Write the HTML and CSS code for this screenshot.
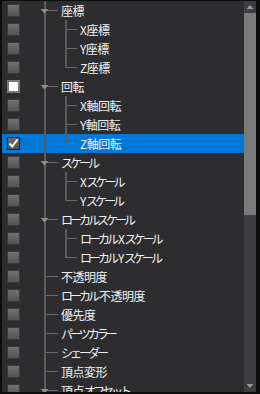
FILE: index.html
```html
<!DOCTYPE html>
<html lang="ja">
<head>
    <meta charset="UTF-8">
    <title>Track List</title>
    <link rel="stylesheet" href="styles.css">
</head>
<body>
    <div class="panel">
        <div class="tree">
            <div class="row"><span class="cell"><span class="cb"></span></span><span class="g1 tee"><span class="tri"></span></span><span class="label">座標</span></div>
            <div class="row"><span class="cell"><span class="cb"></span></span><span class="g1"></span><span class="g2 tee"></span><span class="label">X座標</span></div>
            <div class="row"><span class="cell"><span class="cb"></span></span><span class="g1"></span><span class="g2 tee"></span><span class="label">Y座標</span></div>
            <div class="row"><span class="cell"><span class="cb"></span></span><span class="g1"></span><span class="g2 last"></span><span class="label">Z座標</span></div>
            <div class="row"><span class="cell"><span class="cb on"></span></span><span class="g1 tee"><span class="tri"></span></span><span class="label">回転</span></div>
            <div class="row"><span class="cell"><span class="cb"></span></span><span class="g1"></span><span class="g2 tee"></span><span class="label">X軸回転</span></div>
            <div class="row"><span class="cell"><span class="cb"></span></span><span class="g1"></span><span class="g2 tee"></span><span class="label">Y軸回転</span></div>
            <div class="row selected"><span class="cell"><span class="cb checked"><svg width="11" height="11" viewBox="0 0 11 11"><path d="M1.5 5.5 L4.2 8.5 L9.5 1.5" fill="none" stroke="#fff" stroke-width="2"/></svg></span></span><span class="g1"></span><span class="g2 last"></span><span class="label">Z軸回転</span></div>
            <div class="row"><span class="cell"><span class="cb"></span></span><span class="g1 tee"><span class="tri"></span></span><span class="label"><span class="k">スケール</span></span></div>
            <div class="row"><span class="cell"><span class="cb"></span></span><span class="g1"></span><span class="g2 tee"></span><span class="label">X<span class="k">スケール</span></span></div>
            <div class="row"><span class="cell"><span class="cb"></span></span><span class="g1"></span><span class="g2 last"></span><span class="label">Y<span class="k">スケール</span></span></div>
            <div class="row"><span class="cell"><span class="cb"></span></span><span class="g1 tee"><span class="tri"></span></span><span class="label"><span class="k">ローカルスケール</span></span></div>
            <div class="row"><span class="cell"><span class="cb"></span></span><span class="g1"></span><span class="g2 tee"></span><span class="label"><span class="k mid">ローカル</span>X<span class="k">スケール</span></span></div>
            <div class="row"><span class="cell"><span class="cb"></span></span><span class="g1"></span><span class="g2 last"></span><span class="label"><span class="k mid">ローカル</span>Y<span class="k">スケール</span></span></div>
            <div class="row"><span class="cell"><span class="cb"></span></span><span class="g1 tee"></span><span class="label">不透明度</span></div>
            <div class="row"><span class="cell"><span class="cb"></span></span><span class="g1 tee"></span><span class="label"><span class="k mid">ローカル</span>不透明度</span></div>
            <div class="row"><span class="cell"><span class="cb"></span></span><span class="g1 tee"></span><span class="label">優先度</span></div>
            <div class="row"><span class="cell"><span class="cb"></span></span><span class="g1 tee"></span><span class="label"><span class="k">パーツカラー</span></span></div>
            <div class="row"><span class="cell"><span class="cb"></span></span><span class="g1 tee"></span><span class="label"><span class="k">シェーダー</span></span></div>
            <div class="row"><span class="cell"><span class="cb"></span></span><span class="g1 tee"></span><span class="label">頂点変形</span></div>
            <div class="row"><span class="cell"><span class="cb"></span></span><span class="g1 tee"><span class="tri"></span></span><span class="label">頂点<span class="k">オフセット</span></span></div>
        </div>
        <div class="scrollbar">
            <div class="arrow up"><span></span></div>
            <div class="track"><div class="thumb"></div></div>
            <div class="arrow down"><span></span></div>
        </div>
    </div>
</body>
</html>
```

FILE: styles.css
```css
body {
    margin: 0;
    background: #0c0c0c;
}

.panel {
    display: flex;
    width: 260px;
    height: 394px;
    box-sizing: border-box;
    background: #2d2d30;
    border-top: 1px solid #0c0c0c;
    border-left: 2px solid #0c0c0c;
    border-bottom: 2px solid #0c0c0c;
    border-right: 4px solid #0c0c0c;
    font-family: "Noto Sans CJK JP", "Noto Sans", sans-serif;
    font-size: 12px;
    color: #f1f1f1;
}

.tree {
    flex: 1;
    overflow: hidden;
}

.row {
    display: flex;
    height: 19px;
    align-items: stretch;
    white-space: nowrap;
}

.row.selected {
    background: #0078d7;
}

.cell {
    flex: none;
    width: 32px;
    display: flex;
    align-items: center;
    padding-left: 5px;
    box-sizing: border-box;
}

.cb {
    width: 13px;
    height: 13px;
    box-sizing: border-box;
    border: 1px solid #3a3a3c;
    background: linear-gradient(#717171, #535353);
    display: flex;
    align-items: center;
    justify-content: center;
}

.cb.on {
    border: 2px solid #7a7a7a;
    background: #fff;
}

.cb.checked {
    border-color: #2a2a2a;
    background: linear-gradient(#6c6c6c, #505050);
}

/* tree guide lines */
.g1 {
    flex: none;
    width: 24px;
    display: flex;
    align-items: center;
    background-image: linear-gradient(#5c5c5c, #5c5c5c);
    background-size: 2px 100%;
    background-position: 10px 0;
    background-repeat: no-repeat;
}

.g1.tee {
    background-image: linear-gradient(#5c5c5c, #5c5c5c), linear-gradient(#6a6a6a, #6a6a6a);
    background-size: 2px 100%, 14px 1px;
    background-position: 10px 0, 10px 9px;
}

.g2 {
    flex: none;
    width: 19px;
    background-image: linear-gradient(#5c5c5c, #5c5c5c), linear-gradient(#6a6a6a, #6a6a6a);
    background-size: 2px 100%, 12px 1px;
    background-position: 7px 0, 7px 9px;
    background-repeat: no-repeat;
}

.g2.last {
    background-size: 2px 10px, 12px 1px;
}

.tri {
    width: 9px;
    height: 5px;
    margin-left: 6px;
    margin-top: 1px;
    background: #8c8c8c;
    clip-path: polygon(0 0, 100% 0, 50% 100%);
}

.label {
    padding-left: 3px;
    line-height: 19px;
    letter-spacing: -0.5px;
}

/* kana are set narrower than kanji */
.k {
    letter-spacing: -3px;
}

.k.mid {
    margin-right: 2px;
}

.scrollbar {
    flex: none;
    width: 12px;
    display: flex;
    flex-direction: column;
    background: #3e3e42;
}

.arrow {
    height: 12px;
    display: flex;
    align-items: center;
    justify-content: center;
}

.arrow span {
    width: 7px;
    height: 4px;
    background: #999;
}

.arrow.up span {
    clip-path: polygon(50% 0, 100% 100%, 0 100%);
}

.arrow.down span {
    clip-path: polygon(0 0, 100% 0, 50% 100%);
}

.track {
    flex: 1;
}

.thumb {
    height: 202px;
    background: #7b7b7b;
}
```
